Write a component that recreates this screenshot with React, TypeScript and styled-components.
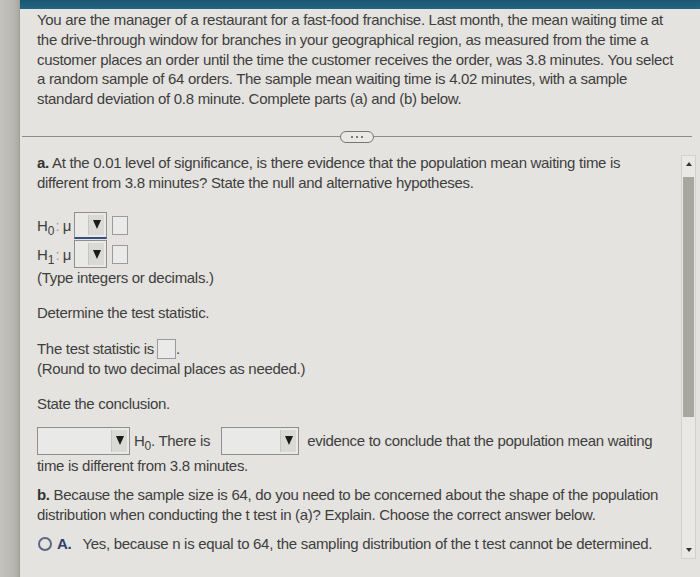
import React from "react";
import styled, { createGlobalStyle } from "styled-components";

const Global = createGlobalStyle`
  html, body { margin: 0; padding: 0; }
  body {
    background: #d6d5d0;
    font-family: "Liberation Sans", Arial, sans-serif;
    color: #3e3e3e;
  }
`;

const Frame = styled.div`
  display: flex;
  width: 700px;
  height: 577px;
  overflow: hidden;
`;

const LeftStrip = styled.div`
  width: 19px;
  flex: none;
  background: linear-gradient(90deg, #c3c2bd 0%, #b8b7b2 70%, #a9a8a3 100%);
  border-right: 1px solid #9f9e99;
`;

const Main = styled.div`
  flex: 1;
  display: flex;
  flex-direction: column;
  min-width: 0;
`;

const TopBar = styled.div`
  height: 9px;
  flex: none;
  background: linear-gradient(180deg, #1b5770, #236583);
`;

const Panel = styled.div`
  flex: 1;
  display: flex;
  flex-direction: column;
  background: #e4e3df;
  min-height: 0;
`;

const Text = styled.div<{ $mt?: number; $lh?: number }>`
  font-size: 15px;
  letter-spacing: -0.3px;
  line-height: ${(p) => p.$lh ?? 20}px;
  margin-top: ${(p) => p.$mt ?? 0}px;
  white-space: nowrap;
`;

const Intro = styled(Text)`
  padding: 1px 0 0 17px;
  line-height: 19.8px;
`;

const DividerRow = styled.div`
  margin-top: 22px;
  height: 12px;
  display: flex;
  align-items: center;
  padding: 0 8px 0 2px;
`;

const Rule = styled.div`
  flex: 1;
  height: 1px;
  background: #8d8c88;
`;

const Pill = styled.div`
  width: 32px;
  height: 10px;
  border: 1px solid #777;
  border-radius: 6px;
  display: flex;
  align-items: center;
  justify-content: center;
  gap: 3px;
  background: #e9e8e4;
`;

const Dot = styled.span`
  width: 2px;
  height: 2px;
  background: #555;
  border-radius: 50%;
`;

const ContentRow = styled.div`
  flex: 1;
  display: flex;
  min-height: 0;
`;

const Body = styled.div`
  flex: 1;
  padding: 10px 0 0 17px;
  min-width: 0;
`;

const Bold = styled.b<{ $blue?: boolean }>`
  font-weight: 700;
  color: ${(p) => (p.$blue ? "#2d3f6c" : "#333")};
`;

const Hyps = styled.div`
  margin-top: 18px;
  display: flex;
  flex-direction: column;
`;

const HypRow = styled.div`
  display: flex;
  align-items: center;
  height: 29px;
`;

const HLabel = styled.span`
  width: 37px;
  font-size: 15px;
  display: inline-block;
  white-space: nowrap;
`;

const Sub = styled.sub`
  font-size: 12px;
  vertical-align: -4px;
  line-height: 0;
`;

const Colon = styled.span`
  color: #9a9a98;
  margin: 0 3px 0 1px;
`;

const Select = styled.div<{ $w: number; $focus?: boolean }>`
  width: ${(p) => p.$w}px;
  height: ${(p) => (p.$focus ? 27 : 28)}px;
  box-sizing: border-box;
  border: 1px solid #8f8f8f;
  border-bottom: ${(p) => (p.$focus ? "2px solid #33507f" : "1px solid #8f8f8f")};
  background: #e9e9e7;
  display: flex;
  justify-content: flex-end;
  align-items: stretch;
  padding: 2px;
  flex: none;
`;

const Arrow = styled.div`
  width: 15px;
  background: #d9d9d6;
  border-left: 1px solid #c4c4c1;
  display: flex;
  align-items: center;
  justify-content: center;
  &::after {
    content: "";
    width: 0;
    height: 0;
    border-left: 4.5px solid transparent;
    border-right: 4.5px solid transparent;
    border-top: 9px solid #1a1a1a;
  }
`;

const AnswerBox = styled.span<{ $w?: number; $h?: number; $ml?: number }>`
  display: inline-block;
  width: ${(p) => p.$w ?? 16}px;
  height: ${(p) => p.$h ?? 19}px;
  box-sizing: border-box;
  border: 1px solid #9a9aa0;
  background: #eaeae8;
  margin-left: ${(p) => p.$ml ?? 4}px;
  flex: none;
`;

const StatRow = styled.div`
  margin-top: 16px;
  display: flex;
  align-items: center;
  height: 20px;
  font-size: 15px;
  letter-spacing: -0.3px;
  white-space: nowrap;
`;

const ConcRow = styled.div`
  margin-top: 12px;
  display: flex;
  align-items: center;
  height: 30px;
  font-size: 15px;
  letter-spacing: -0.3px;
  white-space: nowrap;
`;

const Inline = styled.span<{ $ml?: number; $mr?: number }>`
  margin-left: ${(p) => p.$ml ?? 0}px;
  margin-right: ${(p) => p.$mr ?? 0}px;
  display: inline-block;
`;

const Option = styled.div`
  margin-top: 7px;
  display: flex;
  align-items: center;
  height: 22px;
  font-size: 15px;
  letter-spacing: -0.3px;
  white-space: nowrap;
`;

const Radio = styled.span`
  width: 14px;
  height: 14px;
  box-sizing: border-box;
  border: 2px solid #5d6683;
  border-radius: 50%;
  margin: 0 5px 0 1px;
  flex: none;
`;

const Scrollbar = styled.div`
  width: 13px;
  flex: none;
  margin: 12px 4px 18px 0;
  background: #e9e8e5;
  border: 1px solid #d2d1cd;
  display: flex;
  flex-direction: column;
  align-items: center;
`;

const ScrollArrow = styled.div<{ $down?: boolean }>`
  height: 16px;
  width: 100%;
  display: flex;
  align-items: center;
  justify-content: center;
  &::after {
    content: "";
    width: 0;
    height: 0;
    border-left: 3.5px solid transparent;
    border-right: 3.5px solid transparent;
    ${(p) =>
      p.$down
        ? "border-top: 4px solid #333;"
        : "border-bottom: 4px solid #333;"}
  }
`;

const Thumb = styled.div`
  width: 11px;
  height: 240px;
  margin-top: 5px;
  background: #a7a6a1;
`;

const Spacer = styled.div`
  flex: 1;
`;

export default function App() {
  return (
    <>
      <Global />
      <Frame>
        <LeftStrip />
        <Main>
          <TopBar />
          <Panel>
            <Intro>
              You are the manager of a restaurant for a fast-food franchise. Last month, the mean waiting time at
              <br />
              the drive-through window for branches in your geographical region, as measured from the time a
              <br />
              customer places an order until the time the customer receives the order, was 3.8 minutes. You select
              <br />
              a random sample of 64 orders. The sample mean waiting time is 4.02 minutes, with a sample
              <br />
              standard deviation of 0.8 minute. Complete parts (a) and (b) below.
            </Intro>
            <DividerRow>
              <Rule />
              <Pill>
                <Dot />
                <Dot />
                <Dot />
              </Pill>
              <Rule />
            </DividerRow>
            <ContentRow>
              <Body>
                <Text>
                  <Bold>a.</Bold> At the 0.01 level of significance, is there evidence that the population mean waiting time is
                  <br />
                  different from 3.8 minutes? State the null and alternative hypotheses.
                </Text>
                <Hyps>
                  <HypRow>
                    <HLabel>
                      H<Sub>0</Sub>
                      <Colon>:</Colon>μ
                    </HLabel>
                    <Select $w={33} $focus>
                      <Arrow />
                    </Select>
                    <AnswerBox $ml={5} />
                  </HypRow>
                  <HypRow>
                    <HLabel>
                      H<Sub>1</Sub>
                      <Colon>:</Colon>μ
                    </HLabel>
                    <Select $w={33}>
                      <Arrow />
                    </Select>
                    <AnswerBox $ml={5} />
                  </HypRow>
                </Hyps>
                <Text $lh={18}>(Type integers or decimals.)</Text>
                <Text $mt={16}>Determine the test statistic.</Text>
                <StatRow>
                  The test statistic is
                  <AnswerBox $w={19} $h={20} $ml={3} />.
                </StatRow>
                <Text>(Round to two decimal places as needed.)</Text>
                <Text $mt={15}>State the conclusion.</Text>
                <ConcRow>
                  <Select $w={93}>
                    <Arrow />
                  </Select>
                  <Inline $ml={4} $mr={11}>
                    H<Sub>0</Sub>. There is
                  </Inline>
                  <Select $w={78}>
                    <Arrow />
                  </Select>
                  <Inline $ml={8}>evidence to conclude that the population mean waiting</Inline>
                </ConcRow>
                <Text>time is different from 3.8 minutes.</Text>
                <Text $mt={9} $lh={20.5}>
                  <Bold>b.</Bold> Because the sample size is 64, do you need to be concerned about the shape of the population
                  <br />
                  distribution when conducting the t test in (a)? Explain. Choose the correct answer below.
                </Text>
                <Option>
                  <Radio />
                  <Bold $blue>A.</Bold>
                  <Inline $ml={11}>
                    Yes, because n is equal to 64, the sampling distribution of the t test cannot be determined.
                  </Inline>
                </Option>
              </Body>
              <Scrollbar>
                <ScrollArrow />
                <Thumb />
                <Spacer />
                <ScrollArrow $down />
              </Scrollbar>
            </ContentRow>
          </Panel>
        </Main>
      </Frame>
    </>
  );
}
